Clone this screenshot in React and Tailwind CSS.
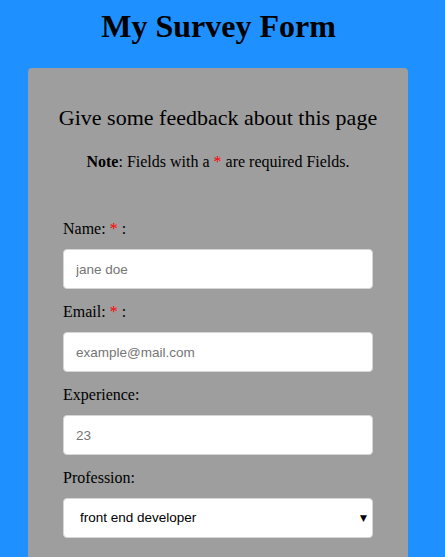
import { useState } from 'react';

const Field = ({ label, required, children }) => (
    <div className="flex flex-col">
        <label className="text-[16px] leading-[20px] mb-[10px]">
            {label}
            {required && (
                <>
                    {" "}<span className="text-[#ff0000]">*</span> :
                </>
            )}
        </label>
        {children}
    </div>
);

const inputCls =
    "h-[40px] mb-[13px] w-full bg-white border border-[#d6d6d6] rounded-[4px] pl-[12px] pr-3 text-[13.5px] text-black placeholder:text-[#757575] outline-none font-['Liberation_Sans',Arial,sans-serif]";

export default function App() {
    const [profession, setProfession] = useState("front end developer");

    return (
        <div className="min-h-[557px] w-full bg-[#1e90ff] text-black font-['Liberation_Serif','Times_New_Roman',serif]">
            <div className="w-[437px] pt-2">
                {/* Titulo */}
                <h1 className="text-center text-[32px] leading-[37px] font-bold">My Survey Form</h1>

                {/* Tarjeta */}
                <div className="mt-[23px] ml-[28px] w-[380px] bg-[#9e9e9e] rounded-[4px] pt-[37px] px-[35px] pb-6">
                    <h2 className="-mx-[35px] text-center whitespace-nowrap text-[22px] leading-[26px]">Give some feedback about this page</h2>
                    <p className="mt-[21px] text-center text-[16px] leading-[20px]">
                        <strong>Note</strong>: Fields with a <span className="text-[#ff0000]">*</span> are required Fields.
                    </p>

                    <form className="mt-[47px]" onSubmit={(e) => e.preventDefault()}>
                        <Field label="Name:" required>
                            <input type="text" placeholder="jane doe" className={inputCls} />
                        </Field>
                        <Field label="Email:" required>
                            <input type="email" placeholder="example@mail.com" className={inputCls} />
                        </Field>
                        <Field label="Experience:">
                            <input type="number" placeholder="23" className={inputCls} />
                        </Field>
                        <Field label="Profession:">
                            <div className="relative">
                                <select
                                    value={profession}
                                    onChange={(e) => setProfession(e.target.value)}
                                    className="appearance-none h-[40px] mb-[11px] w-full bg-white border border-[#d6d6d6] rounded-[4px] pl-[16px] pr-8 text-[13.5px] text-black outline-none font-['Liberation_Sans',Arial,sans-serif]"
                                >
                                    <option>front end developer</option>
                                    <option>back end developer</option>
                                    <option>full stack developer</option>
                                </select>
                                <span className="pointer-events-none absolute right-[6px] top-[16px] text-[9px] leading-none font-['DejaVu_Sans',sans-serif]">▼</span>
                            </div>
                        </Field>
                    </form>
                </div>
            </div>
        </div>
    );
}
